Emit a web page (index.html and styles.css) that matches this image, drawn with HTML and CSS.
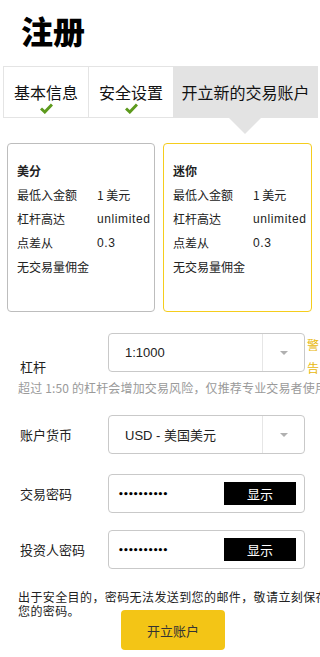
FILE: index.html
```html
<!DOCTYPE html>
<html lang="zh-CN">
<head>
  <meta charset="UTF-8" />
  <meta name="viewport" content="width=device-width, initial-scale=1.0"/>
  <title>注册</title>
  <link rel="stylesheet" href="styles.css">
</head>
<body>
  <h1 class="page-title">注册</h1>

  <!-- Steps -->
  <div class="steps">
    <div class="step done">
      <span>基本信息</span>
      <svg class="tick" width="13" height="11" viewBox="0 0 13 11"><path d="M1 5.5 L4.8 9 L12 1.5" fill="none" stroke="#5d9a1d" stroke-width="3"/></svg>
    </div>
    <div class="step done">
      <span>安全设置</span>
      <svg class="tick" width="13" height="11" viewBox="0 0 13 11"><path d="M1 5.5 L4.8 9 L12 1.5" fill="none" stroke="#5d9a1d" stroke-width="3"/></svg>
    </div>
    <div class="step current">
      <span>开立新的交易账户</span>
    </div>
  </div>

  <!-- Account types -->
  <div class="plans">
    <div class="plan">
      <div class="plan-name">美分</div>
      <div class="plan-row"><span class="k">最低入金额</span><span>1 美元</span></div>
      <div class="plan-row"><span class="k">杠杆高达</span><span class="latin">unlimited</span></div>
      <div class="plan-row"><span class="k">点差从</span><span class="latin">0.3</span></div>
      <div class="plan-row"><span class="k">无交易量佣金</span></div>
    </div>
    <div class="plan selected">
      <div class="plan-name">迷你</div>
      <div class="plan-row"><span class="k">最低入金额</span><span>1 美元</span></div>
      <div class="plan-row"><span class="k">杠杆高达</span><span class="latin">unlimited</span></div>
      <div class="plan-row"><span class="k">点差从</span><span class="latin">0.3</span></div>
      <div class="plan-row"><span class="k">无交易量佣金</span></div>
    </div>
  </div>

  <!-- Form -->
  <div class="form">
    <div class="field leverage">
      <label class="field-label">杠杆</label>
      <div class="select">
        <span class="select-value">1:1000</span>
        <span class="select-btn"><i class="caret"></i></span>
      </div>
      <span class="warn">警告</span>
    </div>
    <p class="hint">超过 1:50 的杠杆会增加交易风险，仅推荐专业交易者使用</p>

    <div class="field">
      <label class="field-label">账户货币</label>
      <div class="select">
        <span class="select-value">USD - 美国美元</span>
        <span class="select-btn"><i class="caret"></i></span>
      </div>
    </div>

    <div class="field pw">
      <label class="field-label">交易密码</label>
      <div class="password">
        <span class="dots">••••••••••</span>
        <button class="show-btn">显示</button>
      </div>
    </div>

    <div class="field pw2">
      <label class="field-label">投资人密码</label>
      <div class="password">
        <span class="dots">••••••••••</span>
        <button class="show-btn">显示</button>
      </div>
    </div>

    <p class="note">出于安全目的，密码无法发送到您的邮件，敬请立刻保存<br>您的密码。</p>
    <button class="submit-btn">开立账户</button>
  </div>
</body>
</html>
```

FILE: styles.css
```css
body {
  margin: 0;
  font-family: "Liberation Sans", "Noto Sans CJK SC", sans-serif;
  background-color: #fff;
  color: #222;
  overflow: hidden;
  width: 320px;
}

.page-title {
  margin: 0;
  padding: 10px 0 0 21px;
  font-family: "Noto Sans CJK SC", sans-serif;
  font-weight: 900;
  font-size: 32px;
  line-height: 40px;
  color: #000;
}

/* Steps bar */
.steps {
  display: flex;
  margin: 16px 2px 0 3px;
  height: 52px;
}

.step {
  display: flex;
  flex-direction: column;
  align-items: center;
  padding-top: 15px;
  box-sizing: border-box;
  font-family: "Noto Sans CJK SC", sans-serif;
  font-size: 16px;
  line-height: 20px;
  color: #111;
}

.step.done {
  width: 85px;
  border: 1px solid #e4e4e4;
  border-right: none;
}

.step.done + .step.done {
  border-left: 1px solid #e4e4e4;
}

.step.current {
  position: relative;
  flex: 1;
  background-color: #e3e3e3;
  padding-top: 16px;
}

.step.current::after {
  content: "";
  position: absolute;
  left: 50%;
  bottom: -16px;
  margin-left: -17px;
  border-left: 16px solid transparent;
  border-right: 16px solid transparent;
  border-top: 16px solid #e3e3e3;
}

.tick {
  margin-top: 1px;
}

/* Plans */
.plans {
  display: flex;
  gap: 8px;
  margin: 25px 0 0 7px;
}

.plan {
  width: 148px;
  height: 169px;
  box-sizing: border-box;
  border: 1px solid #bdbdbd;
  border-radius: 4px;
  padding: 15px 0 0 9px;
  font-family: "Noto Sans CJK SC", sans-serif;
  font-size: 12px;
  line-height: 24px;
  color: #222;
}

.plan.selected {
  width: 149px;
  border-color: #f5cd1d;
}

.plan-name {
  font-weight: bold;
}

.plan-row {
  display: flex;
  white-space: nowrap;
}

.plan-row .k {
  width: 80px;
  flex-shrink: 0;
}

.latin {
  font-family: "Liberation Sans", sans-serif;
  letter-spacing: 0.6px;
}

/* Form */
.form {
  margin-top: 21px;
  padding-left: 20px;
}

.field {
  display: flex;
  align-items: center;
  height: 39px;
}

.field-label {
  width: 88px;
  flex-shrink: 0;
  font-family: "Noto Sans CJK SC", sans-serif;
  font-size: 13px;
  color: #222;
}

.leverage {
  align-items: flex-start;
}

.leverage .field-label {
  padding-top: 26px;
  line-height: 16px;
}

.select, .password {
  width: 197px;
  height: 39px;
  box-sizing: border-box;
  border: 1px solid #c9c9c9;
  border-radius: 4px;
  display: flex;
  align-items: center;
  flex-shrink: 0;
}

.select-value {
  flex: 1;
  padding-left: 16px;
  font-size: 13px;
  color: #222;
}

.select-btn {
  width: 41px;
  height: 100%;
  border-left: 1px solid #e6e6e6;
  display: flex;
  align-items: center;
  justify-content: center;
}

.caret {
  width: 0;
  height: 0;
  border-left: 4px solid transparent;
  border-right: 4px solid transparent;
  border-top: 4px solid #b0b0b0;
}

.warn {
  width: 12px;
  margin-left: 2px;
  font-family: "Noto Sans CJK SC", sans-serif;
  font-size: 12px;
  line-height: 23px;
  color: #e8b80c;
  flex-shrink: 0;
}

.hint {
  margin: 8px 0 0 -2px;
  white-space: nowrap;
  font-family: "Noto Sans CJK SC", sans-serif;
  font-size: 12px;
  line-height: 16px;
  letter-spacing: 0.15px;
  color: #9a9a9a;
}

.hint + .field {
  margin-top: 19px;
}

.pw {
  margin-top: 20px;
}

.pw2 {
  margin-top: 17px;
}

.dots {
  flex: 1;
  padding-left: 9px;
  font-family: "DejaVu Sans", sans-serif;
  font-size: 9px;
  font-weight: bold;
  letter-spacing: -0.8px;
  color: #000;
}

.show-btn {
  width: 72px;
  height: 23px;
  margin-right: 8px;
  border: none;
  background-color: #000;
  color: #fff;
  font-family: "Noto Sans CJK SC", sans-serif;
  font-size: 13px;
  padding: 0;
}

.note {
  margin: 21px 0 0 -2px;
  white-space: nowrap;
  font-family: "Noto Sans CJK SC", sans-serif;
  font-size: 12px;
  line-height: 14px;
  letter-spacing: 0.4px;
  color: #222;
}

.submit-btn {
  display: block;
  margin: -8px 0 0 101px;
  width: 104px;
  height: 40px;
  border: none;
  border-radius: 4px;
  background-color: #f3c516;
  color: #333;
  font-family: "Noto Sans CJK SC", sans-serif;
  font-size: 13px;
  padding: 0;
}
```
